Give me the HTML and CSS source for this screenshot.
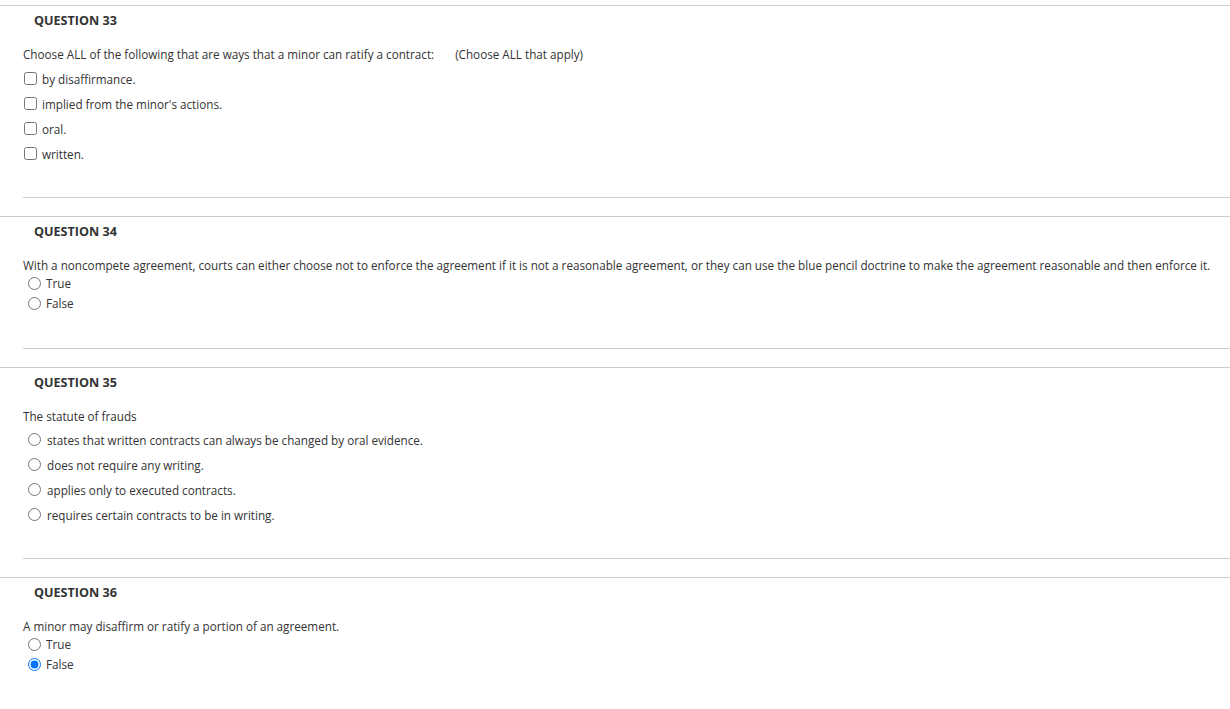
FILE: index.html
```html
<!DOCTYPE html>
<html lang="en">
<head>
<meta charset="utf-8">
<title>Quiz</title>
<link rel="stylesheet" href="styles.css">
</head>
<body>
<div class="page">
  <section class="question">
    <h3 class="q-title">QUESTION 33</h3>
    <div class="q-body">
      <p class="q-text">Choose ALL of the following that are ways that a minor can ratify a contract:<span class="q-hint">(Choose ALL that apply)</span></p>
      <ul class="opts opts-multi">
        <li class="opt"><input type="checkbox" class="cb"><span>by disaffirmance.</span></li>
        <li class="opt"><input type="checkbox" class="cb"><span>implied from the minor's actions.</span></li>
        <li class="opt"><input type="checkbox" class="cb"><span>oral.</span></li>
        <li class="opt"><input type="checkbox" class="cb"><span>written.</span></li>
      </ul>
    </div>
  </section>
  <section class="question">
    <h3 class="q-title">QUESTION 34</h3>
    <div class="q-body">
      <p class="q-text">With a noncompete agreement, courts can either choose not to enforce the agreement if it is not a reasonable agreement, or they can use the blue pencil doctrine to make the agreement reasonable and then enforce it.</p>
      <ul class="opts opts-tf">
        <li class="opt"><input type="radio" name="q34" class="rb"><span>True</span></li>
        <li class="opt"><input type="radio" name="q34" class="rb"><span>False</span></li>
      </ul>
    </div>
  </section>
  <section class="question">
    <h3 class="q-title">QUESTION 35</h3>
    <div class="q-body">
      <p class="q-text">The statute of frauds</p>
      <ul class="opts opts-mc">
        <li class="opt"><input type="radio" name="q35" class="rb"><span>states that written contracts can always be changed by oral evidence.</span></li>
        <li class="opt"><input type="radio" name="q35" class="rb"><span>does not require any writing.</span></li>
        <li class="opt"><input type="radio" name="q35" class="rb"><span>applies only to executed contracts.</span></li>
        <li class="opt"><input type="radio" name="q35" class="rb"><span>requires certain contracts to be in writing.</span></li>
      </ul>
    </div>
  </section>
  <section class="question">
    <h3 class="q-title">QUESTION 36</h3>
    <div class="q-body">
      <p class="q-text">A minor may disaffirm or ratify a portion of an agreement.</p>
      <ul class="opts opts-tf">
        <li class="opt"><input type="radio" name="q36" class="rb"><span>True</span></li>
        <li class="opt"><input type="radio" name="q36" class="rb" checked><span>False</span></li>
      </ul>
    </div>
  </section>
</div>
</body>
</html>
```
FILE: styles.css
```css
html, body {
  margin: 0;
  padding: 0;
  background: #fff;
}
body {
  font-family: "Open Sans", "DejaVu Sans", sans-serif;
  font-size: 11.7px;
  color: #333;
}
.page {
  padding-top: 5px;
}
.question {
  border-top: 1px solid #cdcdcd;
  padding-bottom: 18px;
}
.question:last-child {
  padding-bottom: 0;
}
.q-title {
  margin: 6px 0 0;
  padding-left: 34px;
  font-size: 12.6px;
  line-height: 17px;
  font-weight: 700;
  color: #333;
}
.q-body {
  margin-left: 23px;
  border-bottom: 1px solid #cdcdcd;
}
.question:last-child .q-body {
  border-bottom: none;
}
.q-text {
  margin: 17px 0 0;
  line-height: 17px;
}
.q-hint {
  margin-left: 21px;
}
.opts {
  list-style: none;
  margin: 0;
  padding: 0;
}
.opt {
  display: flex;
  align-items: center;
}
.opts-multi {
  margin-top: 3px;
  padding-bottom: 31px;
}
.opts-multi .opt {
  height: 25px;
  gap: 5px;
}
.opts-mc {
  margin-top: 2px;
  padding-bottom: 31px;
}
.opts-mc .opt {
  height: 25px;
  gap: 6px;
  padding-left: 5px;
}
.opts-tf {
  margin-top: -1px;
  padding-bottom: 35px;
}
.opts-tf .opt {
  height: 20px;
  gap: 5px;
  padding-left: 5px;
}
.cb, .rb {
  margin: 0;
  width: 13px;
  height: 13px;
  flex: none;
}
.cb {
  margin-left: 1px;
}
```
